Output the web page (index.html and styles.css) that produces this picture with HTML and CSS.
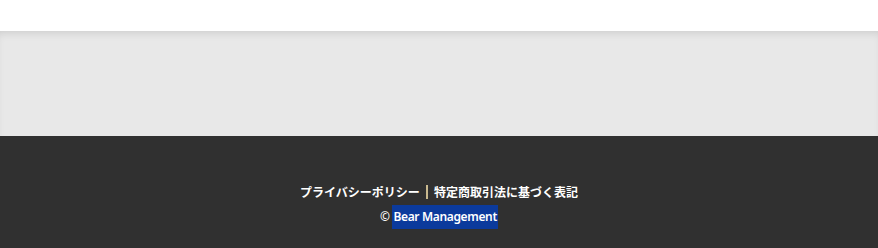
FILE: index.html
```html
<!DOCTYPE html>
<html lang="ja">
<head>
    <meta charset="UTF-8">
    <meta name="viewport" content="width=device-width, initial-scale=1.0">
    <title>Bear Management</title>
    <link rel="stylesheet" href="styles.css">
</head>
<body>
    <!-- Header -->
    <header class="site-header"></header>

    <!-- Gray band -->
    <div class="band"></div>

    <!-- Footer -->
    <footer class="site-footer">
        <p class="footer-links">
            <a href="#">プライバシーポリシー</a><span class="divider"></span><a href="#">特定商取引法に基づく表記</a>
        </p>
        <p class="copyright">© <span class="selected">Bear Management</span></p>
    </footer>
</body>
</html>
```

FILE: styles.css
```css
body {
    margin: 0;
    font-family: "Noto Sans", "Noto Sans CJK JP", sans-serif;
}

/* Header */
.site-header {
    height: 31px;
    background: #ffffff;
}

/* Gray band with top shadow */
.band {
    height: 105px;
    background: #e8e8e8;
    box-shadow: inset 0 6px 8px -4px rgba(0, 0, 0, 0.12);
}

/* Footer */
.site-footer {
    background: #303030;
    height: 112px;
    padding-top: 45px;
    box-sizing: border-box;
    text-align: center;
    color: #ffffff;
    font-size: 12px;
    font-weight: bold;
}

.site-footer p {
    margin: 0;
    line-height: 24px;
}

.footer-links a {
    color: #ffffff;
    text-decoration: none;
}

.divider {
    display: inline-block;
    width: 2px;
    height: 14px;
    background: #c9b98f;
    margin: 0 6px;
    vertical-align: -2px;
}

.copyright {
    font-weight: 600;
    letter-spacing: -0.35px;
}

.selected {
    background: #0b3a9c;
    display: inline-block;
    padding: 0 1px;
    margin-left: 0;
}
```
